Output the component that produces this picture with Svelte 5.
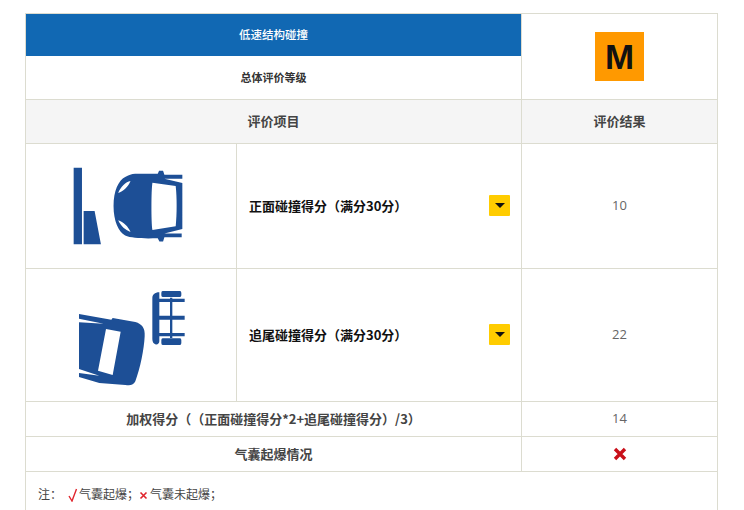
<script>
	const rows = [
		{ label: '正面碰撞得分（满分30分）', score: 10, icon: 'front' },
		{ label: '追尾碰撞得分（满分30分）', score: 22, icon: 'rear' }
	];
</script>

<div class="page">
	<table>
		<colgroup>
			<col class="c1" />
			<col class="c2" />
			<col class="c3" />
		</colgroup>
		<tbody>
			<tr class="blue-row">
				<td colspan="2" class="blue">低速结构碰撞</td>
				<td rowspan="2" class="grade-cell"><span class="grade">M</span></td>
			</tr>
			<tr class="overall-row">
				<td colspan="2" class="overall">总体评价等级</td>
			</tr>
			<tr class="head-row">
				<th colspan="2">评价项目</th>
				<th>评价结果</th>
			</tr>
			{#each rows as row}
				<tr class={row.icon}>
					<td class="pic">
						{#if row.icon === 'front'}
							<svg class="ico-front" viewBox="140 75 340 240" width="113" height="80" aria-hidden="true">
								<path d="M145 80H170V310H145ZM175 210H208L227 310H175Z" fill="#1d4f96" />
								<path
									fill="#1d4f96"
									fill-rule="evenodd"
									d="M330 98H398L402 89H414L418 101H472V113H418L472 126V264L418 278H470V289H418L414 302H403L398 292C360 293 320 293 300 284C280 272 265 240 265 195C265 150 280 118 300 108C310 102 320 98 330 98ZM382 125C378 150 378 240 382 267L452 256C456 220 456 170 452 135ZM316 120C302 122 286 138 279 156C294 152 310 136 316 120ZM279 238C286 254 300 268 316 273C310 258 294 242 279 238Z"
								/>
							</svg>
						{:else}
							<svg class="ico-rear" viewBox="155 58 330 294" width="110" height="98" aria-hidden="true">
								<path
									fill="#1d4f96"
									d="M402 68V215C402 222 396 226 390 224C384 222 381 216 381 208V85C381 76 388 68 402 68ZM412 64H464Q468 64 468 70V77Q468 82 464 82H412Q408 82 408 77V70Q408 64 412 64ZM412 206H464Q468 206 468 212V220Q468 226 464 226H412Q408 226 408 220V212Q408 206 412 206ZM402 87H478V97H402ZM402 138H478V150H402ZM402 190H478V200H402ZM434 84H441V205H434Z"
								/>
								<path
									fill="#1d4f96"
									fill-rule="evenodd"
									d="M161 133L258 150L262 145L330 157C350 163 360 175 358 200C356 240 345 295 330 335C325 346 315 349 300 346L222 340L161 322V310L222 318L161 298V158L235 162L161 147ZM242 178L218 303L262 316L286 186Z"
								/>
							</svg>
						{/if}
					</td>
					<td class="item">
						<div class="item-inner">
							<strong>{row.label}</strong>
							<span class="toggle"><i></i></span>
						</div>
					</td>
					<td class="score">{row.score}</td>
				</tr>
			{/each}
			<tr class="plain-row">
				<th colspan="2">加权得分（（正面碰撞得分*2+追尾碰撞得分）/3）</th>
				<td class="score">14</td>
			</tr>
			<tr class="plain-row">
				<th colspan="2">气囊起爆情况</th>
				<td class="score">
					<svg class="cross" viewBox="0 0 14 14" width="14" height="14" aria-hidden="true">
						<path d="M2 2L12 12M12 2L2 12" stroke="#c9101a" stroke-width="3.4" />
					</svg>
				</td>
			</tr>
			<tr>
				<td colspan="3" class="note">
					<p>
						<span class="lead">注：</span>
						<svg class="tick" viewBox="0 0 10 14" width="10" height="14" aria-hidden="true">
							<path d="M1 8L4 13L8.5 1" fill="none" stroke="#e0242c" stroke-width="1.4" />
						</svg>
						<span>气囊起爆；</span>
						<svg class="x" viewBox="0 0 9 9" width="9" height="9" aria-hidden="true">
							<path d="M1.5 1.5L7.5 7.5M7.5 1.5L1.5 7.5" stroke="#e0242c" stroke-width="1.6" />
						</svg>
						<span>气囊未起爆；</span>
					</p>
				</td>
			</tr>
		</tbody>
	</table>
</div>

<style>
	:global(body) {
		overflow: hidden;
		background: #fff;
	}

	.page {
		padding: 13px 0 0 25px;
		font-family: "Noto Sans CJK SC", "Open Sans", sans-serif;
		color: #333;
		text-spacing-trim: space-all;
	}

	table {
		width: 693px;
		table-layout: fixed;
		border-collapse: collapse;
	}

	.c1 {
		width: 211px;
	}

	.c2 {
		width: 285px;
	}

	td,
	th {
		border: 1px solid #dcdcd0;
		padding: 0;
		text-align: center;
	}

	.blue-row {
		height: 42px;
	}

	.overall-row {
		height: 44px;
	}

	.blue {
		background: #1168b3;
		color: #fff;
		font-size: 11.5px;
		font-weight: 500;
		border-bottom: none;
		padding-bottom: 1px;
	}

	.overall {
		border-top: none;
		font-size: 11px;
		font-weight: 700;
		color: #333;
		padding-bottom: 1px;
	}

	.grade {
		display: inline-flex;
		align-items: center;
		justify-content: center;
		width: 49px;
		height: 49px;
		background: #ff9900;
		color: #111;
		font-family: "Liberation Sans", sans-serif;
		font-size: 35px;
		font-weight: 700;
		vertical-align: middle;
	}

	.head-row {
		height: 44px;
		background: #f5f5f5;
	}

	th {
		font-size: 13px;
		font-weight: 700;
		color: #444;
		padding-bottom: 2px;
	}

	.front {
		height: 125px;
	}

	.rear {
		height: 133px;
	}

	.pic svg {
		display: block;
	}

	.ico-front {
		margin: 0 0 0 46px;
	}

	.ico-rear {
		margin: 6px 0 0 51px;
	}

	.item-inner {
		display: flex;
		align-items: center;
		justify-content: space-between;
		padding: 0 11px 2px 12px;
	}

	.item strong {
		font-size: 13px;
		font-weight: 700;
		color: #111;
	}

	.toggle {
		display: flex;
		align-items: center;
		justify-content: center;
		width: 21px;
		height: 21px;
		background: #ffcc00;
		border-radius: 1px;
	}

	.toggle i {
		width: 0;
		height: 0;
		border-left: 5px solid transparent;
		border-right: 5px solid transparent;
		border-top: 5px solid #111;
	}

	.score {
		font-family: "Open Sans", sans-serif;
		font-size: 13px;
		color: #666;
		padding-bottom: 2px;
	}

	.cross {
		display: block;
		margin: 1px auto 0;
	}

	.plain-row {
		height: 35px;
	}

	.note {
		padding: 12px 12px 30px;
		font-size: 12px;
		color: #444;
		text-align: left;
	}

	.note p {
		display: flex;
		align-items: center;
		margin: 0;
		line-height: 20px;
	}

	.lead {
		width: 30px;
	}

	.tick {
		margin: 2px 1px 0 0;
	}

	.x {
		margin: 3px 2px 0 0;
	}
</style>
